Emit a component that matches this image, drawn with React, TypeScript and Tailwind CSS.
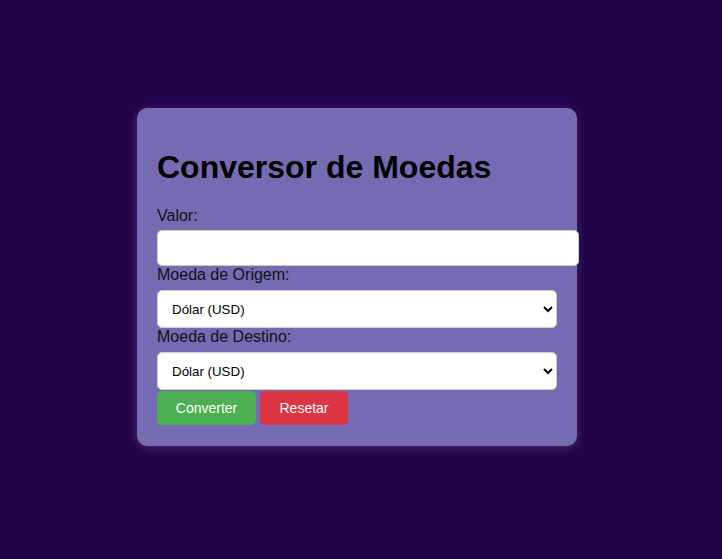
const currencies = ["Dólar (USD)", "Euro (EUR)", "Real (BRL)"];

function Field({ label, children }: { label: string; children: React.ReactNode }) {
  return (
    <>
      <label className="mb-[5.5px] block text-[16px] leading-[18.4px] text-[#111]">{label}</label>
      {children}
    </>
  );
}

function CurrencySelect() {
  return (
    <select
      defaultValue={currencies[0]}
      className="block h-[38px] w-[400px] rounded-[5px] border border-[#ccc] bg-white px-[10px] text-[13.33px] text-black"
    >
      {currencies.map((c) => (
        <option key={c}>{c}</option>
      ))}
    </select>
  );
}

export default function App() {
  return (
    <div
      className="flex min-h-[559px] items-center justify-center bg-[#22024a] pr-[8px] pb-[5px]"
      style={{ fontFamily: '"Liberation Sans", Arial, sans-serif' }}
    >
      <div className="h-[338px] w-[440px] rounded-[10px] bg-[#756bb3] p-[20px] shadow-[0_2px_10px_rgba(255,255,255,0.18)]">
        <h1 className="mt-[21px] mb-[20.5px] text-[32px] leading-[37px] font-bold text-black">Conversor de Moedas</h1>

        <Field label="Valor:">
          <input
            type="number"
            className="block h-[36px] w-[422px] rounded-[5px] border border-[#ccc] bg-white px-[10px] text-[16px] outline-none"
          />
        </Field>

        <Field label="Moeda de Origem:">
          <CurrencySelect />
        </Field>

        <Field label="Moeda de Destino:">
          <CurrencySelect />
        </Field>

        <div className="mt-[1px] flex gap-[4px]">
          <button className="h-[34px] w-[99px] rounded-[5px] bg-[#4caf50] text-[14px] text-white">Converter</button>
          <button className="h-[34px] w-[88px] rounded-[5px] bg-[#dc3545] text-[14px] text-white">Resetar</button>
        </div>
      </div>
    </div>
  );
}
